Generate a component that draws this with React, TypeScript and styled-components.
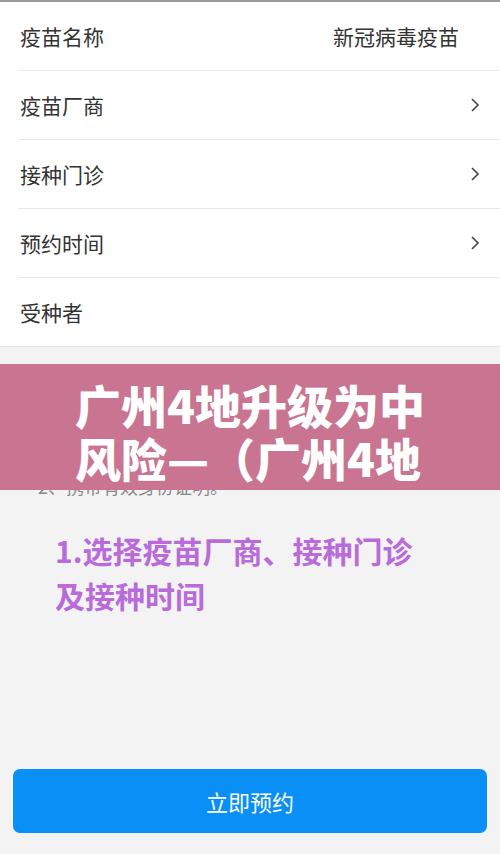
import React from 'react';
import styled, {createGlobalStyle} from 'styled-components';

const GlobalStyle = createGlobalStyle`
  body {
    margin: 0;
    background: #f3f3f3;
    font-family: "Noto Sans CJK SC", "Noto Sans", sans-serif;
  }
`;

const Page = styled.div`
  height: 854px;
  display: flex;
  flex-direction: column;
  overflow: hidden;
`;

const FormList = styled.div`
  background: #fff;
  border-top: 2px solid #9b9b9b;
  border-bottom: 1px solid #e2e2e2;
`;

const Row = styled.div<{$last?: boolean}>`
  display: flex;
  align-items: center;
  height: 68px;
  margin-left: 18px;
  padding: 0 20px 0 2px;
  border-bottom: ${props => (props.$last ? 'none' : '1px solid #e8e8e8')};
  font-size: 21px;
  color: #333;
`;

const Label = styled.span`
  flex: 1;
`;

const Value = styled.span`
  color: #333;
  padding-right: 21px;
`;

const Chevron = () => (
  <svg width="10" height="16" viewBox="0 0 10 16">
    <polyline points="2,2 8,8 2,14" fill="none" stroke="#444" strokeWidth="1.6" />
  </svg>
);

// the pink title strip lies over the tips text, as in the screenshot
const Notice = styled.div`
  position: relative;
  padding: 94px 0 0 38px;
`;

const NoticeLine = styled.div`
  font-size: 18px;
  line-height: 30px;
  color: #8a8a8a;
`;

const Banner = styled.div`
  position: absolute;
  left: 0;
  right: 0;
  top: 17px;
  height: 126px;
  box-sizing: border-box;
  padding: 14px 0 0 10px;
  background: #c97490;
`;

const BannerTitle = styled.div`
  width: 360px;
  height: 106px;
  margin: 0 auto;
  overflow: hidden;
  word-break: break-all;
  font-size: 46px;
  line-height: 53px;
  font-weight: 900;
  color: #fff;
`;

const Steps = styled.div`
  margin-top: 27px;
  padding-left: 55px;
  font-size: 30px;
  line-height: 45px;
  font-weight: 700;
  color: #b86bd9;
`;

const SubmitButton = styled.button`
  margin: auto 13px 21px;
  height: 64px;
  border: none;
  border-radius: 7px;
  background: #0a8ff7;
  color: #fff;
  font-family: inherit;
  font-size: 22px;
`;

const rows = [
  {label: '疫苗名称', value: '新冠病毒疫苗'},
  {label: '疫苗厂商', arrow: true},
  {label: '接种门诊', arrow: true},
  {label: '预约时间', arrow: true},
  {label: '受种者'},
];

const App = () => (
  <Page>
    <GlobalStyle />
    <FormList>
      {rows.map((row, i) => (
        <Row key={row.label} $last={i === rows.length - 1}>
          <Label>{row.label}</Label>
          {row.value && <Value>{row.value}</Value>}
          {row.arrow && <Chevron />}
        </Row>
      ))}
    </FormList>
    <Notice>
      <NoticeLine>1、请按预约时间前往接种门诊；</NoticeLine>
      <NoticeLine>2、携带有效身份证明。</NoticeLine>
      <Banner>
        <BannerTitle>广州4地升级为中风险—（广州4地升级为中风险地区）</BannerTitle>
      </Banner>
    </Notice>
    <Steps>
      1.选择疫苗厂商、接种门诊
      <br />
      及接种时间
    </Steps>
    <SubmitButton>立即预约</SubmitButton>
  </Page>
);

export default App;
